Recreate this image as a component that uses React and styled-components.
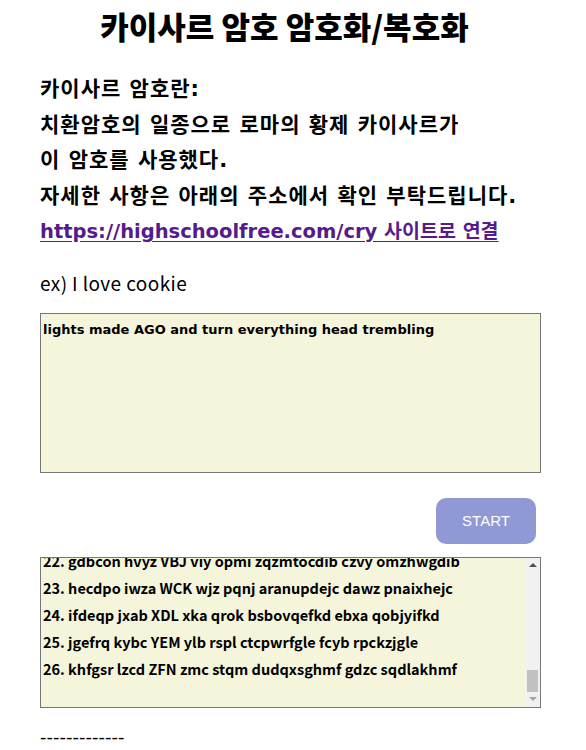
import React, {useEffect, useRef} from 'react';
import styled, {createGlobalStyle} from 'styled-components'

const GlobalStyle = createGlobalStyle`
  body {
    margin: 0;
    background: #ffffff;
    font-family: "Noto Sans CJK KR", sans-serif;
    color: #000;
  }
`

const Page = styled.div`
  width: 500px;
  padding: 0 46px 40px 40px;
`

const Title = styled.h1`
  margin: 4px 11px 0 0;
  height: 44px;
  line-height: 44px;
  text-align: center;
  font-family: "Noto Sans CJK KR", sans-serif;
  font-size: 31px;
  font-weight: 900;
`

const Intro = styled.div`
  margin-top: 24px;
  font-family: "DejaVu Sans", "Noto Sans CJK KR", sans-serif;
  font-size: 21px;
  font-weight: 700;
  line-height: 35.5px;
  letter-spacing: 1px;
`

const Line = styled.div`
  white-space: nowrap;
`

const SiteLink = styled.a`
  color: #551a8b;
  font-size: 19.5px;
  letter-spacing: 0;
  text-decoration: underline;
  text-underline-offset: 3px;
`

const Example = styled.p`
  margin: 18px 0 0 0;
  font-family: "Noto Sans CJK KR", sans-serif;
  font-size: 19px;
  letter-spacing: 0.4px;
  line-height: 30px;
`

const Input = styled.textarea`
  display: block;
  box-sizing: border-box;
  width: 501px;
  height: 160px;
  margin-top: 15px;
  padding: 7px 2px 3px 2px;
  border: 1px solid #767676;
  background: #f5f5dc;
  resize: none;
  font-family: "DejaVu Sans", sans-serif;
  font-size: 13px;
  font-weight: 700;
  line-height: 18px;
  outline: none;
`

const ButtonRow = styled.div`
  display: flex;
  justify-content: flex-end;
  padding: 25px 4px 13px 0;
`

const StartButton = styled.button`
  width: 100px;
  height: 46px;
  border: 0;
  border-radius: 10px;
  background: #9199d4;
  color: #fff;
  font-family: "Liberation Sans", Arial, sans-serif;
  font-size: 15px;
`

const OutputFrame = styled.div`
  display: flex;
  box-sizing: border-box;
  width: 501px;
  height: 151px;
  border: 1px solid #767676;
  background: #f5f5dc;
`

const OutputText = styled.div`
  flex: 1;
  overflow: hidden;
  padding: 0 2px 25px 2px;
  font-family: "Noto Sans CJK KR", sans-serif;
  font-size: 14.5px;
  font-weight: 700;
  line-height: 27px;
  white-space: nowrap;
`

const ScrollTrack = styled.div`
  display: flex;
  flex-direction: column;
  width: 15px;
  background: #f1f1f1;
`

const ArrowButton = styled.div`
  display: flex;
  align-items: center;
  justify-content: center;
  height: 15px;

  &::before {
    content: "";
    border-left: 4px solid transparent;
    border-right: 4px solid transparent;
    ${p => p.$down
      ? 'border-top: 4px solid #a3a3a3;'
      : 'border-bottom: 4px solid #505050;'}
  }
`

const ThumbLane = styled.div`
  flex: 1;
  display: flex;
  flex-direction: column;
  justify-content: flex-end;
  padding: 0 2px;
`

const Thumb = styled.div`
  height: 22px;
  background: #c1c1c1;
`

const Divider = styled.div`
  margin-top: 17px;
  font-family: "DejaVu Sans", sans-serif;
  font-size: 18px;
  line-height: 24px;
`

const source = 'lights made AGO and turn everything head trembling'

const shift = (text, n) => text.replace(/[a-zA-Z]/g, ch => {
  const base = ch <= 'Z' ? 65 : 97
  return String.fromCharCode((ch.charCodeAt(0) - base + n) % 26 + base)
})

const App = () => {
  const outRef = useRef(null)
  const results = Array.from({length: 26}, (_, i) => `${i + 1}. ${shift(source, i)}`)

  useEffect(()=>{
    if (outRef.current){
      outRef.current.scrollTop = outRef.current.scrollHeight
    }
  },[])

  return (
    <Page>
      <GlobalStyle />
      <Title>카이사르 암호 암호화/복호화</Title>
      <Intro>
        <Line>카이사르 암호란:</Line>
        <Line>치환암호의 일종으로 로마의 황제 카이사르가</Line>
        <Line>이 암호를 사용했다.</Line>
        <Line>자세한 사항은 아래의 주소에서 확인 부탁드립니다.</Line>
        <Line><SiteLink href="#cry">https://highschoolfree.com/cry 사이트로 연결</SiteLink></Line>
      </Intro>
      <Example>ex) I love cookie</Example>
      <Input defaultValue={source} />
      <ButtonRow>
        <StartButton>START</StartButton>
      </ButtonRow>
      <OutputFrame>
        <OutputText ref={outRef}>
          {results.map(r => <div key={r}>{r}</div>)}
        </OutputText>
        <ScrollTrack>
          <ArrowButton />
          <ThumbLane>
            <Thumb />
          </ThumbLane>
          <ArrowButton $down />
        </ScrollTrack>
      </OutputFrame>
      <Divider>-------------</Divider>
    </Page>
  )
}

export default App
